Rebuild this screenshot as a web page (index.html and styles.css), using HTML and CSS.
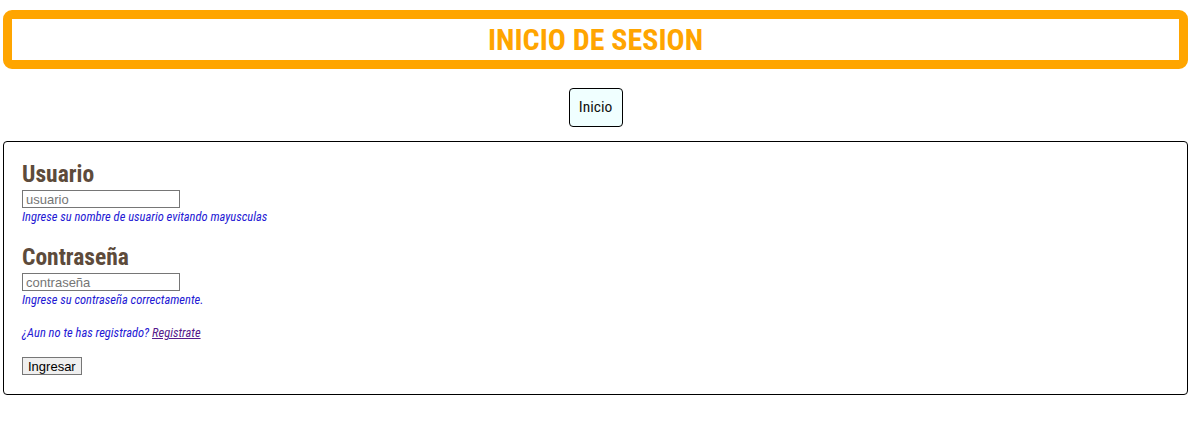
FILE: index.html
```html
<!DOCTYPE html>
<html lang="es">
<head>
<meta charset="utf-8">
<title>Inicio de sesion</title>
<link rel="stylesheet" href="styles.css">
</head>
<body>
<header class="titulo">
  <h1>INICIO DE SESION</h1>
</header>
<nav class="menu">
  <a class="menu-btn" href="#">Inicio</a>
</nav>
<form class="caja">
  <div class="campo">
    <label class="etiqueta" for="usuario">Usuario</label>
    <input class="entrada" id="usuario" type="text" placeholder="usuario">
    <span class="ayuda">Ingrese su nombre de usuario evitando mayusculas</span>
  </div>
  <div class="campo">
    <label class="etiqueta" for="clave">Contraseña</label>
    <input class="entrada" id="clave" type="password" placeholder="contraseña">
    <span class="ayuda">Ingrese su contraseña correctamente.</span>
  </div>
  <p class="registro">¿Aun no te has registrado? <a href="#">Registrate</a></p>
  <div class="acciones"><button class="boton" type="button">Ingresar</button></div>
</form>
</body>
</html>
```
FILE: styles.css
```css
body {
  margin: 0;
  padding: 10px 3px;
  font-family: "Roboto Condensed", "Liberation Sans Narrow", Roboto, sans-serif;
  background: #fff;
}
.titulo {
  border: 9px solid #ffa500;
  border-radius: 9px;
  text-align: center;
}
.titulo h1 {
  margin: 0;
  font-size: 30px;
  line-height: 41px;
  font-weight: 700;
  color: #ffa500;
}
.menu {
  display: flex;
  justify-content: center;
  margin: 19px 0 14px;
}
.menu-btn {
  display: block;
  width: 54px;
  height: 39px;
  box-sizing: border-box;
  border: 1px solid #000;
  border-radius: 4px;
  background: #f0ffff;
  color: #111;
  text-decoration: none;
  font-size: 15.5px;
  line-height: 37px;
  text-align: center;
}
.caja {
  border: 1px solid #000;
  border-radius: 4px;
  padding: 18px 18px 19px;
  display: flex;
  flex-direction: column;
}
.campo {
  display: flex;
  flex-direction: column;
  align-items: flex-start;
  margin-bottom: 18px;
}
.etiqueta {
  font-size: 23.5px;
  line-height: 28px;
  font-weight: 700;
  color: #5d4b3b;
}
.entrada {
  width: 158px;
  height: 18px;
  box-sizing: border-box;
  margin: 2px 0 0;
  padding: 0 3px;
  border: 1px solid #767676;
  font-family: "Liberation Sans", Arial, sans-serif;
  font-size: 13px;
}
.entrada::placeholder { color: #757575; }
.ayuda {
  font-size: 12.5px;
  line-height: 17px;
  font-style: italic;
  color: #2419d4;
}
.registro {
  margin: -1px 0 16px;
  font-size: 12.5px;
  line-height: 16px;
  font-style: italic;
  color: #2419d4;
}
.registro a { color: #551a8b; }
.acciones { display: flex; }
.boton {
  font-family: "Liberation Sans", Arial, sans-serif;
  font-size: 13px;
  height: 18px;
  padding: 0 5px;
  border: 1px solid #767676;
  border-radius: 0;
  background: #efefef;
  color: #000;
}
```
